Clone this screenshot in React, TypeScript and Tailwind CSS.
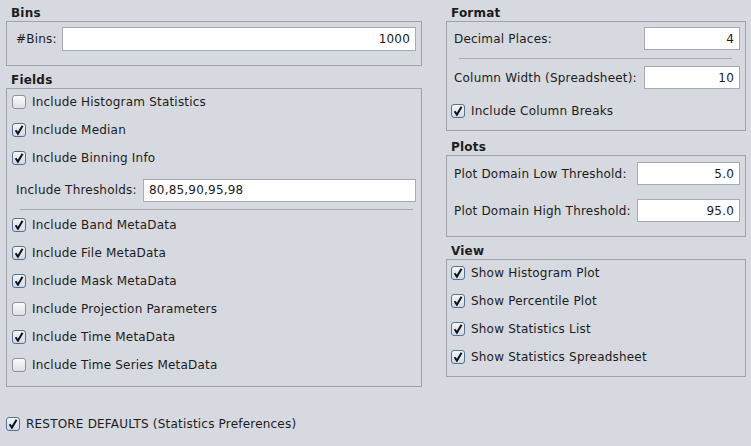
import React from "react";

const bg = "bg-[#d6d9df]";

function Check({ checked }: { checked: boolean }) {
  return (
    <span
      className={[
        "flex h-[14px] w-[14px] shrink-0 items-center justify-center rounded-[3px] border",
        checked
          ? "border-[#56708f] bg-gradient-to-b from-[#f4f7fb] to-[#cfd9e6]"
          : "border-[#8d939c] bg-gradient-to-b from-[#fbfbfc] to-[#dde0e5]"
      ].join(" ")}
    >
      {checked ? (
        <svg width="12" height="12" viewBox="0 0 12 12">
          <path d="M2.6 6.2 L4.9 9.6 L9.6 1.8" fill="none" stroke="#111" strokeWidth="2" strokeLinejoin="miter" />
        </svg>
      ) : null}
    </span>
  );
}

function CheckRow({ label, checked, className = "" }: { label: string; checked: boolean; className?: string }) {
  return (
    <div className={"flex h-[24px] items-center gap-[6px] " + className}>
      <Check checked={checked} />
      <span>{label}</span>
    </div>
  );
}

function Title({ children, className = "" }: { children: React.ReactNode; className?: string }) {
  return <div className={"h-[16px] pl-[5px] text-[12px] font-bold leading-[16px] " + className}>{children}</div>;
}

function Field({ value, className = "", left = false }: { value: string; className?: string; left?: boolean }) {
  return (
    <div
      className={[
        "flex h-[23px] items-center border border-[#a7abb2] bg-white px-[5px]",
        left ? "justify-start" : "justify-end",
        className
      ].join(" ")}
    >
      {value}
    </div>
  );
}

export default function App() {
  return (
    <div
      className={`flex h-[446px] w-[751px] overflow-hidden ${bg} text-[12px] leading-[16px] tracking-[0.2px] text-[#1c1c1c]`}
      style={{ fontFamily: '"DejaVu Sans", Verdana, sans-serif' }}
    >
      {/* left column */}
      <div className="ml-[6px] flex w-[416px] flex-col">
        <Title className="mt-[5px]">Bins</Title>
        <div className="flex h-[45px] items-start border border-[#9ea3ab] pl-[9px] pr-[5px] pt-[5px]">
          <div className="flex h-[24px] items-center">#Bins:</div>
          <Field value="1000" className="ml-auto h-[24px] w-[354px]" />
        </div>

        <Title className="mt-[6px]">Fields</Title>
        <div className="flex h-[299px] flex-col border border-[#9ea3ab] pl-[5px] pt-[1px]">
          <CheckRow label="Include Histogram Statistics" checked={false} />
          <CheckRow label="Include Median" checked className="mt-[4px]" />
          <CheckRow label="Include Binning Info" checked className="mt-[4px]" />
          <div className="mt-[8px] flex h-[24px] items-center pl-[4px] pr-[5px]">
            <span>Include Thresholds:</span>
            <Field value="80,85,90,95,98" left className="ml-auto w-[273px]" />
          </div>
          <div className="ml-[8px] mr-[8px] mt-[7px] h-px bg-[#a6aab1]" />
          <CheckRow label="Include Band MetaData" checked className="mt-[3px]" />
          <CheckRow label="Include File MetaData" checked className="mt-[4px]" />
          <CheckRow label="Include Mask MetaData" checked className="mt-[4px]" />
          <CheckRow label="Include Projection Parameters" checked={false} className="mt-[4px]" />
          <CheckRow label="Include Time MetaData" checked className="mt-[4px]" />
          <CheckRow label="Include Time Series MetaData" checked={false} className="mt-[4px]" />
        </div>

        <CheckRow label="RESTORE DEFAULTS (Statistics Preferences)" checked className="mt-[25px]" />
      </div>

      {/* right column */}
      <div className="ml-[24px] flex w-[300px] flex-col">
        <Title className="mt-[5px]">Format</Title>
        <div className="flex h-[110px] flex-col border border-[#9ea3ab] pt-[5px]">
          <div className="flex h-[23px] items-center pl-[7px] pr-[5px]">
            <span>Decimal Places:</span>
            <Field value="4" className="ml-auto w-[96px]" />
          </div>
          <div className="ml-[12px] mr-[13px] mt-[8px] h-px bg-[#a6aab1]" />
          <div className="mt-[7px] flex h-[23px] items-center pl-[7px] pr-[5px]">
            <span>Column Width (Spreadsheet):</span>
            <Field value="10" className="ml-auto w-[96px]" />
          </div>
          <CheckRow label="Include Column Breaks" checked className="mt-[10px] pl-[4px]" />
        </div>

        <Title className="mt-[8px]">Plots</Title>
        <div className="flex h-[82px] flex-col border border-[#9ea3ab] pt-[6px]">
          <div className="flex h-[23px] items-center pl-[7px] pr-[5px]">
            <span>Plot Domain Low Threshold:</span>
            <Field value="5.0" className="ml-auto w-[103px]" />
          </div>
          <div className="mt-[14px] flex h-[23px] items-center pl-[7px] pr-[5px]">
            <span>Plot Domain High Threshold:</span>
            <Field value="95.0" className="ml-auto w-[103px]" />
          </div>
        </div>

        <Title className="mt-[6px]">View</Title>
        <div className="flex h-[118px] flex-col border border-[#9ea3ab] pl-[4px] pt-[1px]">
          <CheckRow label="Show Histogram Plot" checked />
          <CheckRow label="Show Percentile Plot" checked className="mt-[4px]" />
          <CheckRow label="Show Statistics List" checked className="mt-[4px]" />
          <CheckRow label="Show Statistics Spreadsheet" checked className="mt-[4px]" />
        </div>
      </div>
    </div>
  );
}
